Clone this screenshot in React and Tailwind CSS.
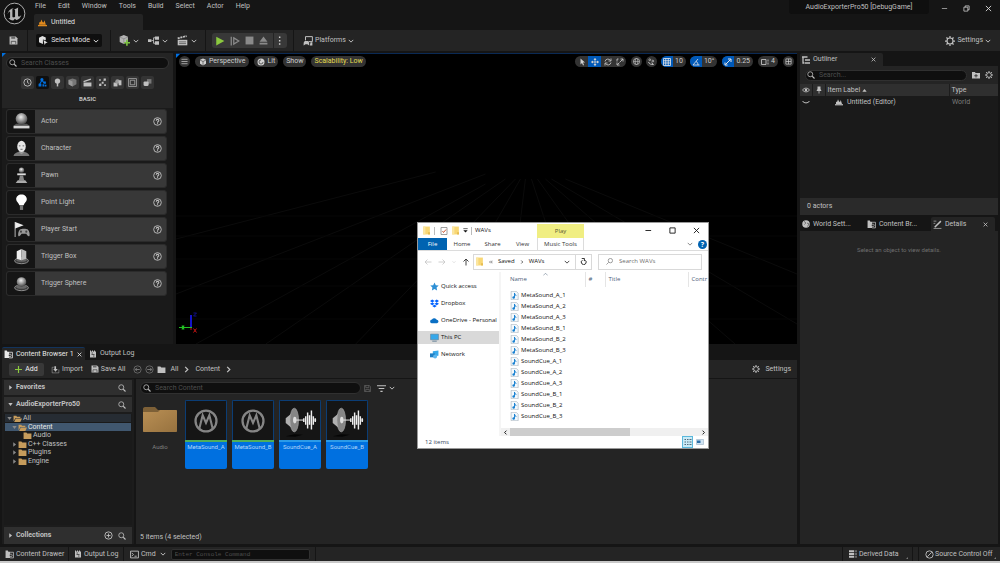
// src/App.jsx
import React, { useState } from "react";

// ------------------ Icons ------------------
const Svg = ({ children, box = 16, className = "size-[9px]" }) => (
  <svg
    viewBox={`0 0 ${box} ${box}`}
    className={`shrink-0 ${className}`}
    fill="none"
    stroke="currentColor"
    strokeWidth="1.6"
    aria-hidden="true"
  >
    {children}
  </svg>
);

const SearchIcon = ({ className }) => (
  <Svg className={className}>
    <circle cx="6.5" cy="6.5" r="5" />
    <path d="M10.5 10.5 15 15" strokeWidth="2.2" />
  </Svg>
);

const ChevronDown = () => (
  <Svg className="size-[6px]">
    <path d="M2 5l6 6 6-6" strokeWidth="2.6" />
  </Svg>
);

const ChevronRight = () => (
  <Svg className="size-[7px]">
    <path d="M5 2l6 6-6 6" strokeWidth="2.8" />
  </Svg>
);

const CloseIcon = ({ className = "size-[5px]" }) => (
  <Svg className={className}>
    <path d="M2 2l12 12M14 2 2 14" strokeWidth="2.6" />
  </Svg>
);

const GearIcon = ({ className }) => (
  <Svg className={className}>
    <circle cx="8" cy="8" r="4.8" strokeWidth="1.8" />
    <path
      d="M8 0v3M8 13v3M0 8h3M13 8h3M2.300 2.300l2.200 2.200M11.500 11.500l2.200 2.200M13.700 2.300l-2.200 2.200M4.500 11.500l-2.200 2.200"
      strokeWidth="2"
    />
  </Svg>
);

const HelpIcon = () => (
  <Svg className="size-[9px]">
    <circle cx="8" cy="8" r="6.8" />
    <path d="M5.8 6.5c0-3 4.5-3 4.5-.3C10.300 8 8 8 8 10M8 11v2" strokeWidth="1.9" />
  </Svg>
);

const LevelIcon = ({ className }) => (
  <Svg className={className}>
    <path d="M0 13.500h16" strokeWidth="2.400" />
    <path d="M2 12V8l2.500-1L6 2.500 8 7l2 1 1.500-4L14 12z" fill="currentColor" stroke="none" />
  </Svg>
);

const SaveIcon = ({ className }) => (
  <Svg className={className}>
    <path d="M1 1h11l3 3v11H1z" fill="currentColor" stroke="none" />
    <path d="M4 1h7v4H4z" fill="#6a6a6a" stroke="none" />
    <path d="M4 14V9.500h8V14" stroke="#303030" strokeWidth="1.200" />
  </Svg>
);

const DrawerIcon = ({ className }) => (
  <Svg className={className}>
    <path d="M1 1h4l1 2h3v11H1z" fill="currentColor" stroke="none" />
    <path d="M9 4h6v10H9" strokeWidth="1.400" />
    <circle cx="10.500" cy="9.500" r="2.300" strokeWidth="1.200" fill="#242424" />
  </Svg>
);

const LogIcon = ({ className }) => (
  <Svg className={className}>
    <path d="M2 1h2v2h2V1h2v2h2V1h2v2h2v12H2z" fill="currentColor" stroke="none" />
    <path d="M5 6h3M5 9h6M8 12h3" stroke="#242424" strokeWidth="1.400" />
  </Svg>
);

const SolidFolder = ({ className }) => (
  <Svg className={className}>
    <path d="M1 2.500h5l1.500 2H15V14H1z" fill="currentColor" stroke="none" />
  </Svg>
);

const OpenFolder = () => (
  <Svg className="size-[9px] text-[#c69c5c]">
    <path d="M1 13V3h5l1 2h6v2H4.500L1 13z" fill="currentColor" stroke="none" />
    <path d="M5 8h11l-3 6H2z" fill="currentColor" stroke="none" />
  </Svg>
);

const Triangle = ({ open, className = "size-[5px]" }) => (
  <Svg className={className}>
    {open ? (
      <path d="M1 3h14L8 13z" fill="currentColor" stroke="none" />
    ) : (
      <path d="M4 1l9 7-9 7z" fill="currentColor" stroke="none" />
    )}
  </Svg>
);

const UnrealLogo = () => (
  <Svg box={24} className="size-[23px] text-[#b4b4b4]">
    <circle cx="12" cy="12" r="10.800" fill="#0e0e0e" strokeWidth="1" />
    <path
      d="M4.800 12.300C5.500 9 8 6.600 11.200 6.200c-.9.500-1.400 1.100-1.400 2v6.600c0 1 .9 1.400 1.600 1.200.5-.1.900-.4 1.200-.7V8.800c0-.7-.4-1-1-1.200 1.600-.1 3.300-.9 4.400-2-.2.500-.3 1.100-.3 1.600v7.200c0 .7.4.9.9.8.9-.2 2-1 2.600-2-.7 3-3 5.200-5.400 5.700l-1.300-1.300-1.800 1.600c-2 .1-4-.9-5-2.400.9.300 1.700 0 1.700-1V10.600c0-1.200-1.300-.9-2.400 1.700z"
      fill="currentColor"
      stroke="none"
    />
  </Svg>
);

const CubeIcon = ({ className }) => (
  <Svg className={className}>
    <path d="M8 1l6 2.500v8L8 15l-6-3.500v-8z" fill="currentColor" stroke="none" />
    <path d="M2 4l6 3 6-3M8 7v8" stroke="#242424" strokeWidth="1.100" />
  </Svg>
);

const SelectModeIcon = () => (
  <Svg className="size-[9px]">
    <path d="M6 0l6 2.500v5L7 6v8L0 11V3z" fill="currentColor" stroke="none" />
    <path d="M8 7l7.500 5-3.500.5L10 16z" fill="currentColor" stroke="none" />
  </Svg>
);

const MusicFileIcon = () => (
  <Svg className="size-[9px]">
    <path d="M2 .5h9l3.500 3.500v11.500H2z" fill="#f4f9fd" stroke="#9aa7b3" strokeWidth="1" />
    <path d="M8 3.500v8M8 4c.3 2 3 2.500 2.500 5" stroke="#1780d0" strokeWidth="1.700" />
    <circle cx="6.500" cy="11.500" r="2.200" fill="#1780d0" stroke="none" />
  </Svg>
);

const YellowFolder = () => (
  <Svg className="size-[9px]">
    <path d="M2 1h12v14H2z" fill="#f8d775" stroke="none" />
    <path d="M2 1h4v14H2z" fill="#fbe6a2" stroke="none" />
    <path d="M11 11h3v4h-3z" fill="#e3b74a" stroke="none" />
  </Svg>
);

// ------------------ Place Actors thumbnails ------------------
const Pedestal = () => (
  <>
    <ellipse cx="16" cy="24" rx="13" ry="5.500" fill="#3a3a3a" stroke="#a5a5a5" strokeWidth="1.500" />
    <ellipse cx="16" cy="22" rx="10" ry="4" fill="#666" stroke="none" />
  </>
);

const actorArt = {
  Actor: (
    <>
      <path d="M1 24l5-4h20l5 4z" fill="#555" stroke="none" />
      <rect x="1" y="24" width="30" height="5" fill="#d5d5d5" stroke="none" />
      <circle cx="16" cy="11" r="11" fill="url(#ball)" stroke="none" />
    </>
  ),
  Character: (
    <>
      <path d="M1 30c1-6 8-7 11-9h8c3 2 10 3 11 9z" fill="#777" stroke="none" />
      <path d="M12 18h8v6l-4 3-4-3z" fill="#999" stroke="none" />
      <ellipse cx="16" cy="12" rx="8" ry="10.500" fill="#e6e6e6" stroke="none" />
      <path d="M11 11h3M18 11h3M14 17.500h4" stroke="#555" />
    </>
  ),
  Pawn: (
    <>
      <circle cx="16" cy="6" r="5" fill="url(#ball)" stroke="none" />
      <rect x="8" y="12" width="16" height="3.500" fill="#ddd" stroke="none" />
      <path d="M13 16h6l2 9H11z" fill="#888" stroke="none" />
      <path d="M5 30l4-5h14l4 5z" fill="#aaa" stroke="none" />
    </>
  ),
  "Point Light": (
    <>
      <path d="M16 1c6 0 10 4 10 9 0 5-5 7-6 11h-8c-1-4-6-6-6-11 0-5 4-9 10-9z" fill="#fff" stroke="none" />
      <rect x="13" y="21" width="6" height="9" fill="#777" stroke="none" />
    </>
  ),
  "Player Start": (
    <>
      <path d="M4 2v28" stroke="#aaa" strokeWidth="2" />
      <path d="M4 2l16 6-16 6z" fill="#eee" stroke="none" />
      <path d="M13 16c3-2 12-2 15 0 3 3 4 9 3 12-2 2-4-1-6-4h-9c-2 3-4 6-6 4-1-3 0-9 3-12z" fill="#999" stroke="none" />
      <circle cx="15" cy="20" r="2" fill="#444" stroke="none" />
      <circle cx="25" cy="20" r="2" fill="#444" stroke="none" />
    </>
  ),
  "Trigger Box": (
    <>
      <Pedestal />
      <path d="M7 6l9-4v21l-9-3z" fill="#eee" stroke="none" />
      <path d="M16 2l9 4v14l-9 3z" fill="#bbb" stroke="none" />
    </>
  ),
  "Trigger Sphere": (
    <>
      <Pedestal />
      <circle cx="16" cy="13" r="9" fill="url(#ball)" stroke="none" />
    </>
  ),
};

const actors = Object.keys(actorArt);

const BallGradient = () => (
  <svg className="absolute size-0" aria-hidden="true">
    <defs>
      <radialGradient id="ball" cx="45%" cy="35%" r="65%">
        <stop offset="0" stopColor="#eee" />
        <stop offset="0.500" stopColor="#999" />
        <stop offset="1" stopColor="#444" />
      </radialGradient>
      <linearGradient id="folder" x1="0" y1="0" x2="1" y2="1">
        <stop offset="0" stopColor="#b98f54" />
        <stop offset="1" stopColor="#97723f" />
      </linearGradient>
    </defs>
  </svg>
);

const categories = [
  {
    name: "Recently placed",
    icon: (
      <>
        <circle cx="8" cy="8" r="6.500" />
        <path d="M8 4v4l3 2" />
      </>
    ),
  },
  {
    name: "Basic",
    icon: (
      <>
        <circle cx="7" cy="3" r="2.800" fill="currentColor" stroke="none" />
        <path d="M7 4 3 11M7 4l4 5" strokeWidth="2" />
        <path d="M1 10h5v5H1zM8 11h3v4H8zM10 6h4v4h-4zM12 12h3v3h-3z" fill="currentColor" stroke="none" />
      </>
    ),
  },
  {
    name: "Lights",
    icon: (
      <>
        <circle cx="8" cy="5.500" r="4.800" fill="currentColor" stroke="none" />
        <path d="M8 9v6" strokeWidth="2.600" />
      </>
    ),
  },
  {
    name: "Shapes",
    icon: (
      <>
        <path d="M1 3l7-2 7 2v8l-7 4-7-4z" fill="#777" stroke="none" />
        <path d="M8 6v9l-7-4V3z" fill="#999" stroke="none" />
      </>
    ),
  },
  {
    name: "Cinematic",
    icon: (
      <>
        <path d="M1 8h14v7H1z" fill="currentColor" stroke="none" />
        <path d="M1 6.500 14 2" strokeWidth="2.600" />
      </>
    ),
  },
  {
    name: "Visual effects",
    icon: (
      <>
        <path d="M2 2h3v3H2zM10 1h4v4h-4zM7 7h3v3H7zM2 10h4v4H2zM11 11h3v3h-3z" fill="currentColor" stroke="none" />
        <path d="M3 12 12 3" strokeWidth="0.800" />
      </>
    ),
  },
  {
    name: "Geometry",
    icon: (
      <>
        <path d="M1 8h7v7H1z" fill="currentColor" stroke="none" />
        <circle cx="8" cy="6" r="4" fill="#999" stroke="none" />
        <path d="M10 4h5v9h-5z" fill="currentColor" stroke="none" />
      </>
    ),
  },
  {
    name: "Volumes",
    icon: (
      <>
        <path d="M1 1h14v14H1z" strokeWidth="1.200" />
        <path d="M4 4h8v8H4z" strokeWidth="1.200" />
      </>
    ),
  },
  {
    name: "All classes",
    icon: (
      <>
        <path d="M7 2h8v8H7z" fill="#777" stroke="none" />
        <rect x="1" y="6" width="9" height="8" rx="2" fill="currentColor" stroke="none" />
      </>
    ),
  },
];

// ------------------ Title bar ------------------
const menus = ["File", "Edit", "Window", "Tools", "Build", "Select", "Actor", "Help"];

const TitleBar = () => (
  <header className="flex h-[30px] shrink-0 items-start justify-between">
    <div className="flex">
      <div className="flex w-[34px] justify-center pt-[2px] pr-[6px]">
        <UnrealLogo />
      </div>
      <div>
        <nav className="flex h-3 items-center gap-3 px-px">
          {menus.map((m) => (
            <button key={m}>{m}</button>
          ))}
        </nav>
        <button className="mt-[2px] flex h-4 w-[109px] items-center gap-1 rounded-t-[2px] bg-[#242424] px-1 text-[#e0e0e0]">
          <LevelIcon className="size-[9px] text-[#e08a1e]" />
          Untitled
        </button>
      </div>
    </div>
    <div className="flex">
      <h1 className="h-[14px] w-[140px] rounded-b-[3px] bg-[#0f0f0f] text-center leading-[14px]">
        AudioExporterPro50 [DebugGame]
      </h1>
      <div className="flex items-center gap-[15px] py-[5px] pr-2 pl-3 text-[#e0e0e0]">
        <button aria-label="Minimize">
          <Svg className="size-[7px]">
            <path d="M2 8h12" strokeWidth="1.400" />
          </Svg>
        </button>
        <button aria-label="Restore">
          <Svg className="size-[7px]">
            <path d="M2 5h9v9H2zM5 5V2h9v9h-3" />
          </Svg>
        </button>
        <button aria-label="Close">
          <Svg className="size-[7px]">
            <path d="M2 2l12 12M14 2 2 14" strokeWidth="2" />
          </Svg>
        </button>
      </div>
    </div>
  </header>
);

// ------------------ Main toolbar ------------------
const ToolButton = ({ label, children }) => (
  <button aria-label={label} className="flex items-center gap-[3px]">
    {children}
    <ChevronDown />
  </button>
);

const MainToolbar = () => (
  <div className="flex h-[21px] shrink-0 items-stretch bg-[#242424]">
    <div className="flex w-7 items-center justify-center border-r border-[#151515]">
      <button aria-label="Save">
        <SaveIcon className="size-[9px]" />
      </button>
    </div>
    <div className="flex w-[83px] items-center border-r border-[#151515] px-2">
      <button className="flex h-[13px] w-[66px] items-center justify-center gap-[3px] rounded-[2px] bg-[#0f0f0f] text-[#e0e0e0]">
        <SelectModeIcon />
        Select Mode
        <ChevronDown />
      </button>
    </div>
    <div className="flex w-[95px] items-center justify-center gap-[9px] border-r border-[#151515]">
      <ToolButton label="Add content">
        <Svg className="size-[11px]">
          <path d="M7 0l6 2.500v7L7 13 1 10V2.500z" fill="#b5b5b5" stroke="none" />
          <path d="M1 3l6 2.500L13 3M7 5.500V13" stroke="#777" strokeWidth="0.800" />
          <path d="M11.500 7v8.500M7.500 11.200h8.500" stroke="#7cc142" strokeWidth="2.400" />
        </Svg>
      </ToolButton>
      <ToolButton label="Blueprints">
        <Svg className="size-[11px]">
          <path d="M0 6h5v4H0zM10 2h6v5h-6zM10 9h6v5h-6z" fill="currentColor" stroke="none" />
          <path d="M5 8h3M11 4H8v8h3" strokeWidth="1.200" />
        </Svg>
      </ToolButton>
      <ToolButton label="Cinematics">
        <Svg className="size-[11px]">
          <path d="M1 7h14v8H1z" fill="currentColor" stroke="none" />
          <path d="M1 5 14 1.500" strokeWidth="2.600" strokeDasharray="3 1" />
          <path d="M3 10h10M3 12.500h10" stroke="#242424" strokeWidth="0.800" />
        </Svg>
      </ToolButton>
    </div>
    <div className="flex w-[88px] items-center justify-center border-r border-[#151515]">
      <div className="flex h-[15px] items-center gap-[5px] rounded-[3px] bg-[#383838] px-[3px] text-[#8a8a8a]">
        <button aria-label="Play">
          <Svg className="size-[10px]">
            <path d="M2 1l13 7-13 7z" fill="#8bc93f" stroke="none" />
          </Svg>
        </button>
        <button aria-label="Step">
          <Svg className="size-[10px]">
            <path d="M2 1v14M6 3l8 5-8 5z" strokeWidth="2" />
          </Svg>
        </button>
        <button aria-label="Stop">
          <Svg className="size-[9px]">
            <path d="M1 1h14v14H1z" fill="currentColor" stroke="none" />
          </Svg>
        </button>
        <button aria-label="Eject">
          <Svg className="size-[9px]">
            <path d="M8 1l7 9H1zM1 12h14v3H1z" fill="currentColor" stroke="none" />
          </Svg>
        </button>
        <button aria-label="Play options" className="flex h-full items-center border-l border-[#242424] pl-px text-[#d0d0d0]">
          <Svg className="size-[9px]">
            <path d="M7 1h2.600v2.600H7zM7 7h2.600v2.600H7zM7 13h2.600v2.600H7z" fill="currentColor" stroke="none" />
          </Svg>
        </button>
      </div>
    </div>
    <button className="flex items-center gap-[2px] px-[9px]">
      <Svg className="size-[10px]">
        <path d="M4 1h11v8H9M4 1v6" />
        <path d="M1 15c0-6 1-7 3-7h3c2 0 3 1 3 7l-3-2H4zM12 10h3v5h-4z" fill="currentColor" stroke="none" />
      </Svg>
      Platforms
      <ChevronDown />
    </button>
    <button className="ml-auto flex items-center gap-[2px] pr-[9px]">
      <GearIcon className="size-[10px]" />
      Settings
      <ChevronDown />
    </button>
  </div>
);

// ------------------ Place Actors ------------------
const PlaceActors = () => {
  const [active, setActive] = useState("Basic");

  return (
    <section className="relative flex w-[171px] shrink-0 flex-col bg-[#1a1a1a]">
      <span className="absolute top-0 left-0 border-t-4 border-r-4 border-t-[#0070e0] border-r-transparent" />
      <div className="flex h-[55px] flex-col items-center bg-[#242424] px-1 pt-1">
        <label className="flex h-3 w-full items-center gap-1 rounded-full border border-[#343434] bg-[#0f0f0f] px-[2px]">
          <SearchIcon className="size-[8px]" />
          <input aria-label="Search classes" placeholder="Search Classes" className="w-full outline-none placeholder:text-[#4d4d4d]" />
        </label>
        <div className="mt-[7px] flex gap-[2px]">
          {categories.map((c) => (
            <button
              key={c.name}
              aria-label={c.name}
              onClick={() => setActive(c.name)}
              className={`flex size-[13px] items-center justify-center rounded-[2px] ${
                active === c.name ? "bg-[#0f0f0f] text-[#0070e0]" : "bg-[#343434]"
              }`}
            >
              <Svg className="size-[9px]">{c.icon}</Svg>
            </button>
          ))}
        </div>
        <h2 className="mt-[5px] text-[6px] font-bold">BASIC</h2>
      </div>
      <ul className="flex flex-col gap-[2px] pt-px pr-[6px] pl-1">
        {actors.map((name) => (
          <li key={name} className="flex h-[25px] overflow-hidden rounded-[3px] border border-[#2b2b2b] bg-[#383838]">
            <span className="flex w-[28px] items-center justify-center bg-[#151515]">
              <Svg box={32} className="size-[17px]">
                {actorArt[name]}
              </Svg>
            </span>
            <span className="flex flex-1 items-center justify-between pr-1 pl-[6px]">
              {name}
              <button aria-label={`Help for ${name}`}>
                <HelpIcon />
              </button>
            </span>
          </li>
        ))}
      </ul>
    </section>
  );
};

// ------------------ Viewport ------------------
const Pill = ({ children, label, className = "px-[3px]" }) => (
  <button aria-label={label} className={`flex h-[11px] items-center gap-[2px] rounded-full bg-[#333] ${className}`}>
    {children}
  </button>
);

const SnapPill = ({ label, value, icon }) => (
  <div className="flex h-[11px] overflow-hidden rounded-full bg-[#333]">
    <button aria-label={label} className="flex w-3 items-center justify-center bg-[#0059b8] text-[#e8e8e8]">
      <Svg className="size-[8px]">{icon}</Svg>
    </button>
    <button className="pr-[3px] pl-[2px]">{value}</button>
  </div>
);

const Viewport = () => (
  <section className="relative flex-1 overflow-hidden border-t border-[#0b2a55] bg-black">
    {/* floor grid */}
    <svg className="absolute inset-0 size-full" viewBox="0 0 622 290" preserveAspectRatio="none" fill="none" stroke="#0b0b0b" aria-hidden="true">
      <path d="M0 240 310 120M20 290 310 130M90 290 330 125M180 290 340 125M250 290 345 125M330 290 350 125M410 290 356 125M480 290 362 125M560 290 370 125M622 270 376 125M622 220 390 125M0 185 260 118" />
      <path d="M0 265h622M0 232h622M0 205h622M0 182h622M0 162h622" stroke="#070707" />
    </svg>
    <span className="absolute top-0 left-0 border-t-4 border-r-4 border-t-[#0070e0] border-r-transparent" />
    <div className="relative flex justify-between px-[3px] pt-[2px] text-[#d0d0d0]">
      <div className="flex gap-[5px]">
        <Pill label="Viewport options" className="px-[2px]">
          <Svg className="size-[7px]">
            <path d="M1 3h14M1 8h14M1 13h14" />
          </Svg>
        </Pill>
        <Pill className="px-1">
          <CubeIcon className="size-[8px]" />
          Perspective
        </Pill>
        <Pill>
          <Svg className="size-[8px]">
            <circle cx="8" cy="8" r="7" fill="currentColor" stroke="none" />
            <path d="M8 4a4 4 0 1 0 4 4" stroke="#444" />
          </Svg>
          Lit
        </Pill>
        <Pill>Show</Pill>
        <Pill className="px-[3px] text-[#e5dc52]">Scalability: Low</Pill>
      </div>
      <div className="flex gap-[5px]">
        <div className="flex h-[11px] overflow-hidden rounded-full bg-[#333]">
          <button aria-label="Select" className="flex w-[13px] items-center justify-center">
            <Svg className="size-[8px]">
              <path d="M5 1v12l3-3 2 5 2-1-2-5h4z" fill="currentColor" stroke="none" />
            </Svg>
          </button>
          <button aria-label="Move" className="flex w-[13px] items-center justify-center bg-[#0059b8]">
            <Svg className="size-[8px]">
              <path d="M8 1v14M1 8h14" />
              <path d="M8 0l3 4H5zM8 16l3-4H5zM0 8l4-3v6zM16 8l-4-3v6z" fill="currentColor" stroke="none" />
            </Svg>
          </button>
          <button aria-label="Rotate" className="flex w-[13px] items-center justify-center">
            <Svg className="size-[8px]">
              <path d="M2 7a6 6 0 0 1 11-2M14 9a6 6 0 0 1-11 2M14 1v5H9M2 15v-5h5" />
            </Svg>
          </button>
          <button aria-label="Scale" className="flex w-3 items-center justify-center">
            <Svg className="size-[8px]">
              <path d="M8 8l6-6M9 2h5v5M2 9v5h5M2 7V2h3M7 9l-4 4" />
            </Svg>
          </button>
        </div>
        <div className="flex gap-1">
          <Pill label="World space" className="px-[2px]">
            <Svg className="size-[7px]">
              <circle cx="8" cy="8" r="7" />
              <ellipse cx="8" cy="8" rx="3" ry="7" strokeWidth="1.200" />
              <path d="M1 8h14" strokeWidth="1.200" />
            </Svg>
          </Pill>
          <Pill label="Surface snapping" className="px-[2px]">
            <Svg className="size-[7px]">
              <circle cx="4" cy="4" r="2" />
              <circle cx="11" cy="7" r="2" />
              <path d="M1 9c2 5 6 6 11 6M8 11l5 4" strokeWidth="2" />
            </Svg>
          </Pill>
          <SnapPill label="Grid snap" value="10" icon={<path d="M1 1h14v14H1zM1 5.500h14M1 10h14M5.500 1v14M10.500 1v14" />} />
          <SnapPill label="Angle snap" value="10°" icon={<path d="M12 2 2 14h13M8 7c3 1 4 4 4 7" />} />
        </div>
        <SnapPill label="Scale snap" value="0.25" icon={<path d="M3 13 13 3M8 2h6v6M2 9v5h5" strokeWidth="2" />} />
        <Pill>
          <Svg className="size-[8px]">
            <path d="M1 3h9v10H1zM14 3v4M14 9v4" />
          </Svg>
          4
        </Pill>
        <Pill label="Maximize viewport" className="px-[2px]">
          <Svg className="size-[7px]">
            <path d="M2 2h12v12H2zM8 2v12M2 8h12" />
          </Svg>
        </Pill>
      </div>
    </div>
    {/* axis gizmo */}
    <svg className="absolute bottom-[10px] left-[2px] h-[22px] w-5" viewBox="0 0 20 22" aria-hidden="true">
      <path d="M13 3v12" stroke="#1414c8" strokeWidth="2" />
      <path d="M1 15.500h13M4 13.500l2 4M6 13.500l-2 4" stroke="#22c022" strokeWidth="1.200" />
      <path d="M15.500 1h3l-3 3h3" stroke="#1414a0" fill="none" strokeWidth="0.800" />
      <path d="M15.500 16.500l3 4M18.500 16.500l-3 4M13 16v2" stroke="#c81414" strokeWidth="1" />
    </svg>
  </section>
);

// ------------------ Content Browser ------------------
const SourceHeader = ({ title, open, add, className = "h-[15px]" }) => (
  <div className={`flex shrink-0 items-center gap-[3px] bg-[#2f2f2f] px-1 ${className}`}>
    <Triangle open={open} />
    <h3 className="flex-1 font-bold">{title}</h3>
    {add && (
      <button aria-label="Add collection" className="mr-[2px]">
        <Svg className="size-[9px]">
          <circle cx="8" cy="8" r="6.500" />
          <path d="M8 4.500v7M4.500 8h7" />
        </Svg>
      </button>
    )}
    <button aria-label={`Search ${title}`} className="mr-[2px]">
      <SearchIcon className="size-[8px]" />
    </button>
  </div>
);

const tree = [
  { name: "All", open: true, pad: "pl-[2px]", row: "bg-[#262c33]" },
  { name: "Content", open: true, pad: "pl-[7px]", row: "bg-[#40576f] text-[#e8e8e8]" },
  { name: "Audio", leaf: true, pad: "pl-[12px]", row: "" },
  { name: "C++ Classes", pad: "pl-[7px]", row: "" },
  { name: "Plugins", pad: "pl-[7px]", row: "" },
  { name: "Engine", pad: "pl-[7px]", row: "" },
];

const MetaArt = () => (
  <Svg box={42} className="h-10 w-10 text-[#858585]">
    <circle cx="21" cy="21" r="11" strokeWidth="2.400" />
    <path d="M14 29l3.500-14L21 23l3.500-8L28 29" strokeWidth="2.200" />
  </Svg>
);

const CueArt = () => (
  <Svg box={42} className="h-10 w-10 text-[#eee]">
    <path d="M6 37l9-2 9 .5-8 2z" fill="#050505" stroke="none" />
    <path d="M6 18l6-5v15l-6-5z" fill="#b0b0b0" stroke="none" />
    <ellipse cx="15" cy="20" rx="4.500" ry="12.500" fill="#858585" stroke="#aaa" strokeWidth="0.600" />
    <ellipse cx="15.500" cy="20" rx="1.800" ry="3.500" fill="#ddd" stroke="none" />
    <path d="M17 20h8M36 20h2" strokeWidth="1" />
    <path d="M25 18v4M27 16v9M29 12v17M31 15v10M33 10v20M35 16v9M37 18v4" strokeWidth="1.500" />
  </Svg>
);

const assets = [
  { name: "MetaSound_A", art: <MetaArt />, line: "bg-[#4fae5a]" },
  { name: "MetaSound_B", art: <MetaArt />, line: "bg-[#4fae5a]" },
  { name: "SoundCue_A", art: <CueArt />, line: "bg-[#2b9be8]" },
  { name: "SoundCue_B", art: <CueArt />, line: "bg-[#2b9be8]" },
];

const ContentBrowser = () => (
  <section className="flex h-[197px] shrink-0 flex-col">
    <div className="flex h-[13px] shrink-0 items-stretch gap-1">
      <button className="flex w-[83px] items-center gap-[3px] rounded-t-[2px] border-t border-[#12335c] bg-[#242424] px-[2px] text-[#e8e8e8]">
        <DrawerIcon className="size-[9px]" />
        Content Browser 1
        <CloseIcon />
      </button>
      <button className="flex items-center gap-[3px]">
        <LogIcon className="size-[8px]" />
        Output Log
      </button>
    </div>

    <div className="flex h-[18px] shrink-0 items-center bg-[#242424] pr-[6px] pl-[7px]">
      <button className="flex h-[13px] w-[35px] items-center justify-center gap-[3px] rounded-[2px] bg-[#383838] text-[#f0f0f0]">
        <Svg className="size-[7px] text-[#8bc93f]">
          <path d="M8 0v16M0 8h16" strokeWidth="2.600" />
        </Svg>
        Add
      </button>
      <button className="ml-[7px] flex items-center gap-[2px]">
        <Svg className="size-[9px]">
          <path d="M5 4H2v10h12V8" strokeWidth="0.800" />
          <path d="M6 2h3v5h3l-4 5-4-5h2z" fill="currentColor" stroke="none" />
        </Svg>
        Import
      </button>
      <button className="ml-2 flex items-center gap-[2px]">
        <SaveIcon className="size-[8px]" />
        Save All
      </button>
      <div className="ml-[7px] flex items-center gap-[3px]">
        <button aria-label="Back">
          <Svg className="size-[9px] text-[#808080]">
            <circle cx="8" cy="8" r="6.500" strokeWidth="1.200" />
            <path d="M12 8H4M7 5 4 8l3 3" />
          </Svg>
        </button>
        <button aria-label="Forward">
          <Svg className="size-[9px] text-[#808080]">
            <circle cx="8" cy="8" r="6.500" strokeWidth="1.200" />
            <path d="M4 8h8M9 5l3 3-3 3" />
          </Svg>
        </button>
        <SolidFolder className="size-[9px]" />
        <a href="#all" className="pl-[2px]">
          All
        </a>
        <span className="px-[2px]">
          <ChevronRight />
        </span>
        <a href="#content">Content</a>
        <span className="px-[2px]">
          <ChevronRight />
        </span>
      </div>
      <button className="ml-auto flex items-center gap-[5px]">
        <GearIcon className="size-[8px]" />
        Settings
      </button>
    </div>

    <div className="flex min-h-0 flex-1 gap-[2px] pt-px">
      <div className="flex w-[132px] shrink-0 flex-col gap-[2px] bg-[#1c1c1c] px-[2px] pt-px">
        <SourceHeader title="Favorites" />
        <SourceHeader title="AudioExporterPro50" open />
        <ul className="flex-1 bg-[#1a1a1a]">
          {tree.map((t) => (
            <li key={t.name} className={`mx-px mb-px flex h-[8px] items-center gap-px leading-[8px] even:mb-0 ${t.pad} ${t.row}`}>
              <span className="w-[5px] text-[#8a8a8a]">{!t.leaf && <Triangle open={t.open} />}</span>
              {t.open ? <OpenFolder /> : <SolidFolder className="size-[9px] text-[#c69c5c]" />}
              {t.name}
            </li>
          ))}
        </ul>
        <SourceHeader title="Collections" add className="h-[17px]" />
      </div>

      <div className="flex flex-1 flex-col bg-[#242424] px-1 pt-[3px] pb-[2px]">
        <div className="flex items-center">
          <label className="flex h-3 w-[221px] items-center gap-1 rounded-full border border-[#303030] bg-[#0f0f0f] px-[2px]">
            <SearchIcon className="size-[8px]" />
            <input aria-label="Search content" placeholder="Search Content" className="w-full outline-none placeholder:text-[#4d4d4d]" />
          </label>
          <button aria-label="Save search" className="ml-[3px] text-[#666]">
            <Svg className="size-[7px]">
              <path d="M1 1h11l3 3v11H1zM4 1v5h7V1M4 15V10h8v5" />
            </Svg>
          </button>
          <button aria-label="Filters" className="ml-[6px] flex items-center gap-[3px]">
            <Svg className="size-[9px]">
              <path d="M0 3h16M3 8h10M6 13h4" strokeWidth="2" />
            </Svg>
            <ChevronDown />
          </button>
        </div>
        <div className="mt-[6px] flex gap-[5px]">
          <div className="flex w-10 flex-col items-center">
            <svg className="mt-[5px] h-7 w-9" viewBox="0 0 36 28" aria-hidden="true">
              <path d="M1 4c0-1 .5-2 2-2h10l3 3h17v5H1z" fill="#7d6037" />
              <path d="M1 7h15l2-2h16c.6 0 1 .4 1 1v20c0 .6-.4 1-1 1H2c-.6 0-1-.4-1-1z" fill="url(#folder)" />
            </svg>
            <span className="mt-[9px] text-[6px] text-[#808080]">Audio</span>
          </div>
          {assets.map((a) => (
            <button key={a.name} className="flex h-[69px] w-[42px] flex-col overflow-hidden rounded-[2px] bg-[#0070e0] text-[#b5d6f8]">
              <span className="flex h-10 w-full items-center justify-center border border-b-0 border-[#0b3d75] bg-[#151515]">{a.art}</span>
              <span className={`h-[2px] w-full shrink-0 ${a.line}`} />
              <span className="w-full flex-1 text-center text-[6px]">{a.name}</span>
            </button>
          ))}
        </div>
        <p className="mt-auto">5 items (4 selected)</p>
      </div>
    </div>
  </section>
);

// ------------------ Outliner + Details ------------------
const Outliner = () => (
  <section className="flex h-[162px] shrink-0 flex-col">
    <div className="h-[13px] shrink-0">
      <button className="flex h-full w-[83px] items-center gap-[3px] rounded-t-[2px] bg-[#242424] px-[2px]">
        <Svg className="size-[8px]">
          <path d="M0 2h11M6 8h10M6 14h10M2 2v12h3" strokeWidth="2.600" />
        </Svg>
        <span className="flex-1 text-left">Outliner</span>
        <span className="pr-[5px]">
          <CloseIcon />
        </span>
      </button>
    </div>
    <div className="flex h-[18px] shrink-0 items-center gap-[5px] bg-[#242424] px-[5px]">
      <label className="flex h-[11px] flex-1 items-center gap-1 rounded-full border border-[#303030] bg-[#0f0f0f] px-px">
        <SearchIcon className="size-[8px]" />
        <input aria-label="Search outliner" placeholder="Search..." className="w-full outline-none placeholder:text-[#4d4d4d]" />
      </label>
      <button aria-label="New folder">
        <Svg className="size-[8px]">
          <path d="M0 2h6l1 2h9v11H0z" fill="currentColor" stroke="none" />
          <path d="M8 6v7M4.500 9.500h7" stroke="#242424" />
        </Svg>
      </button>
      <button aria-label="Outliner settings">
        <GearIcon className="size-[8px]" />
      </button>
    </div>
    <table className="w-full table-fixed border-collapse bg-[#1a1a1a] text-left">
      <thead className="bg-[#2f2f2f]">
        <tr className="h-3">
          <th aria-label="Visibility" className="w-3 border-r border-[#1c1c1c] pl-[2px]">
            <Svg className="size-[8px]">
              <path d="M1 8c3-5 11-5 14 0-3 5-11 5-14 0z" />
              <circle cx="8" cy="8" r="2.500" fill="currentColor" stroke="none" />
            </Svg>
          </th>
          <th aria-label="Pinned" className="w-[13px] border-r border-[#1c1c1c] pl-[2px]">
            <Svg className="size-[8px]">
              <path d="M5 1h6v5l2 4H3l2-4z" fill="currentColor" stroke="none" />
              <path d="M8 10v5" />
            </Svg>
          </th>
          <th className="border-r border-[#1c1c1c] px-[2px] font-normal">
            <span className="flex items-center gap-[2px]">
              Item Label
              <Svg className="size-[5px]">
                <path d="M1 12h14L8 3z" fill="currentColor" stroke="none" />
              </Svg>
            </span>
          </th>
          <th className="w-[49px] px-[2px] font-normal">Type</th>
        </tr>
      </thead>
      <tbody>
        <tr className="h-3">
          <td className="pl-[2px]">
            <Svg className="size-[8px]">
              <path d="M1 6c3 5 11 5 14 0" strokeWidth="2" />
            </Svg>
          </td>
          <td />
          <td>
            <span className="flex items-center gap-1 pl-[10px]">
              <LevelIcon className="size-[8px]" />
              Untitled (Editor)
            </span>
          </td>
          <td className="px-[3px] text-[#7a7a7a]">World</td>
        </tr>
      </tbody>
    </table>
    <div className="flex-1 bg-[#1a1a1a]" />
    <p className="h-[17px] bg-[#2a2a2a] px-[7px] leading-[17px]">0 actors</p>
  </section>
);

const Details = () => (
  <section className="mt-[2px] flex min-h-0 flex-1 flex-col">
    <div className="flex h-[14px] shrink-0 items-stretch">
      <button className="flex w-[65px] items-center gap-[3px] px-[2px]">
        <Svg className="size-[8px]">
          <circle cx="8" cy="8" r="7.500" fill="currentColor" stroke="none" />
          <path d="M4 3c4 1 4 4 1 6M10 6l4 2-3 5" stroke="#555" />
        </Svg>
        World Sett...
      </button>
      <button className="flex flex-1 items-center gap-[3px] px-[2px]">
        <DrawerIcon className="size-[9px]" />
        Content Br...
      </button>
      <button className="mr-[3px] flex w-16 items-center gap-[3px] rounded-t-[2px] bg-[#242424] px-[2px]">
        <Svg className="size-[9px]">
          <path d="M3 13 14 2" strokeWidth="2.600" />
          <path d="M1 15h14M1 2h5M1 6h3" strokeWidth="1.200" />
        </Svg>
        <span className="flex-1 text-left">Details</span>
        <span className="pr-[5px]">
          <CloseIcon />
        </span>
      </button>
    </div>
    <div className="flex-1 bg-[#242424] pt-[14px] text-center text-[6px] text-[#6f6f6f]">
      Select an object to view details.
    </div>
  </section>
);

// ------------------ Status bar ------------------
const StatusBar = () => (
  <footer className="flex h-[14px] shrink-0 items-stretch bg-[#242424]">
    <button className="flex w-[69px] items-center gap-[2px] border-r border-[#151515] pl-[5px]">
      <DrawerIcon className="size-[9px]" />
      Content Drawer
    </button>
    <button className="flex w-[55px] items-center gap-[2px] border-r border-[#151515] pl-[5px]">
      <LogIcon className="size-[8px]" />
      Output Log
    </button>
    <div className="flex items-center gap-[5px] border-r border-[#151515] pr-[5px] pl-[6px]">
      <button className="flex items-center gap-[2px]">
        <Svg className="size-[9px]">
          <path d="M1 2h14v12H1zM3 5l3 3-3 3M8 11h4" />
        </Svg>
        Cmd
        <span className="pl-[2px]">
          <ChevronDown />
        </span>
      </button>
      <input
        aria-label="Console command"
        placeholder="Enter Console Command"
        className="h-[11px] w-[139px] rounded-[2px] border border-[#303030] bg-[#0f0f0f] px-[3px] font-['Liberation_Mono',monospace] text-[6px] outline-none placeholder:text-[#4d4d4d]"
      />
    </div>
    <button className="ml-auto flex w-[71px] items-center gap-[2px] border-x border-[#151515] pl-[6px]">
      <Svg className="size-[8px]">
        <path d="M0 2.500h10M0 8h10M0 13.500h10" strokeWidth="4" />
        <path d="M11 2.500h5M11 8h5M11 13.500h5" strokeWidth="4" stroke="#666" />
      </Svg>
      Derived Data
      <span className="mt-2 mr-1 ml-auto border-b-2 border-l-2 border-b-[#777] border-l-transparent" />
    </button>
    <button className="ml-[5px] flex w-[82px] items-center gap-px border-l border-[#151515] pl-[6px]">
      <Svg className="size-[9px]">
        <circle cx="8" cy="8" r="6.500" />
        <path d="M4 12l8-8" />
      </Svg>
      Source Control Off
      <span className="mt-2 border-b-2 border-l-2 border-b-[#777] border-l-transparent" />
    </button>
  </footer>
);

// ------------------ File Explorer window ------------------
const files = ["MetaSound_A", "MetaSound_B", "SoundCue_A", "SoundCue_B"].flatMap((f) => [1, 2, 3].map((n) => `${f}_${n}`));

const places = [
  {
    name: "Quick access",
    icon: <path d="M8 1l2.300 4.600 5.200.7-3.800 3.600.9 5.200L8 12.600l-4.600 2.500.9-5.200L.5 6.300l5.200-.7z" fill="#2d8fd5" stroke="none" />,
  },
  {
    name: "Dropbox",
    icon: <path d="M4 1 0 3.500 4 6l4-2.500zM12 1 8 3.500 12 6l4-2.500zM4 6 0 8.500 4 11l4-2.500zM12 6 8 8.500l4 2.500 4-2.500zM8 10l-4 2.500L8 15l4-2.500z" fill="#0061fe" stroke="none" />,
  },
  {
    name: "OneDrive - Personal",
    icon: <path d="M4 13a3.500 3.500 0 0 1-.5-7A5 5 0 0 1 12 6.500 3.300 3.300 0 0 1 12.500 13z" fill="#0a6fc4" stroke="none" />,
  },
  {
    name: "This PC",
    icon: (
      <>
        <path d="M1 2h14v10H1z" fill="#36a8ea" stroke="#5f7d94" strokeWidth="1" />
        <path d="M4 14.500h8" stroke="#5f7d94" />
      </>
    ),
  },
  {
    name: "Network",
    icon: (
      <>
        <path d="M5 2l10-1v9l-10 1z" fill="#36a8ea" stroke="none" />
        <path d="M0 6h9v7H0z" fill="#1f7fc4" stroke="none" />
        <circle cx="9" cy="11.500" r="3.500" fill="#5bb6ee" stroke="none" />
      </>
    ),
  },
];

const Explorer = () => {
  const [place, setPlace] = useState("This PC");

  return (
    <section className="absolute top-[222px] left-[417px] flex h-[227px] w-[292px] flex-col border border-[#999] bg-white font-['Open_Sans',sans-serif] text-[6px] leading-[9px] text-[#111]">
      {/* title row */}
      <div className="flex h-[15px] shrink-0 items-center">
        <div className="flex w-[119px] items-center gap-[3px] pl-1">
          <YellowFolder />
          <span className="h-2 w-px bg-[#bbb]" />
          <span className="pl-[2px]">
            <Svg className="size-[8px]">
              <path d="M2 1h12v14H2z" stroke="#888" />
              <path d="M5 8l2 3 5-6" stroke="#d05a35" strokeWidth="2" />
            </Svg>
          </span>
          <YellowFolder />
          <Svg className="size-[5px]">
            <path d="M1 2h14" strokeWidth="2" />
            <path d="M1 7h14l-7 7z" fill="currentColor" stroke="none" />
          </Svg>
          <span className="h-2 w-px bg-[#bbb]" />
          WAVs
        </div>
        <span className="mt-px h-[14px] w-[47px] bg-[#f0ee82] text-center leading-[15px] text-[#555533]">Play</span>
        <div className="ml-auto flex items-center gap-[17px] pr-2">
          <button aria-label="Minimize window">
            <Svg className="size-[7px]">
              <path d="M1 8h13" strokeWidth="2" />
            </Svg>
          </button>
          <button aria-label="Maximize window">
            <Svg className="size-[7px]">
              <path d="M2 2h12v12H2z" strokeWidth="2" />
            </Svg>
          </button>
          <button aria-label="Close window">
            <Svg className="size-[7px]">
              <path d="M2 2l12 12M14 2 2 14" strokeWidth="2" />
            </Svg>
          </button>
        </div>
      </div>

      {/* ribbon tabs */}
      <div className="flex h-[13px] shrink-0 items-stretch border-b border-[#dcdcdc] text-[#333]">
        <button className="w-[29px] bg-[#0063b1] text-white">File</button>
        <button className="w-[30px]">Home</button>
        <button className="w-[31px]">Share</button>
        <button className="w-[29px]">View</button>
        <button className="w-[47px] border-x border-[#dcdcdc]">Music Tools</button>
        <div className="ml-auto flex items-center gap-[5px] pr-px">
          <span className="text-[#888]">
            <ChevronDown />
          </span>
          <button aria-label="Help" className="size-[9px] rounded-full bg-[#0063b1] text-center text-[7px] leading-[9px] font-bold text-white">
            ?
          </button>
        </div>
      </div>

      {/* address row */}
      <div className="flex h-[21px] shrink-0 items-center px-[6px]">
        <div className="flex w-[49px] items-center gap-[6px] text-[#c4c4c4]">
          <button aria-label="Back">
            <Svg className="size-[8px]">
              <path d="M15 8H2M7 3 2 8l5 5" />
            </Svg>
          </button>
          <button aria-label="Forward">
            <Svg className="size-[8px]">
              <path d="M1 8h13M9 3l5 5-5 5" />
            </Svg>
          </button>
          <Svg className="size-[4px]">
            <path d="M2 5l6 6 6-6" strokeWidth="2" />
          </Svg>
          <button aria-label="Up" className="text-[#444]">
            <Svg className="size-[8px]">
              <path d="M8 15V2M3 7l5-5 5 5" strokeWidth="2" />
            </Svg>
          </button>
        </div>
        <div className="flex h-4 w-[119px] items-center gap-[5px] border border-[#d9d9d9] pl-px">
          <YellowFolder />
          <Svg className="size-[4px]">
            <path d="M7 3 2 8l5 5M14 3 9 8l5 5" strokeWidth="2" />
          </Svg>
          <span>Saved</span>
          <Svg className="size-[4px]">
            <path d="M5 2l6 6-6 6" strokeWidth="2.600" />
          </Svg>
          <span className="flex-1">WAVs</span>
          <Svg className="size-[6px]">
            <path d="M2 5l6 6 6-6" strokeWidth="2" />
          </Svg>
          <button aria-label="Refresh" className="flex h-full w-4 items-center justify-center border-l border-[#d9d9d9]">
            <Svg className="size-[7px]">
              <path d="M11.500 5a5.500 5.500 0 1 1-6 0" strokeWidth="2" />
              <path d="M4 1h6v6" strokeWidth="2" />
            </Svg>
          </button>
        </div>
        <label className="ml-[6px] flex h-4 flex-1 items-center gap-[6px] border border-[#d9d9d9] px-[7px] text-[#777]">
          <Svg className="size-[7px]">
            <circle cx="10" cy="6" r="5" />
            <path d="M6 10l-5 5" />
          </Svg>
          <input aria-label="Search WAVs" placeholder="Search WAVs" className="w-full outline-none placeholder:text-[#6d6d6d]" />
        </label>
      </div>

      {/* body */}
      <div className="flex min-h-0 flex-1">
        <nav className="flex w-[83px] shrink-0 flex-col gap-1 border-r-2 border-[#f5f5f5] pt-2">
          {places.map((p) => (
            <button
              key={p.name}
              onClick={() => setPlace(p.name)}
              className={`flex h-[13px] shrink-0 items-center gap-[2px] pl-3 whitespace-nowrap ${place === p.name ? "bg-[#d9d9d9]" : ""}`}
            >
              <Svg className="size-[9px]">{p.icon}</Svg>
              {p.name}
            </button>
          ))}
        </nav>
        <div className="flex min-w-0 flex-1 flex-col">
          <div className="flex-1">
            <table className="w-full table-fixed border-collapse text-left">
              <thead className="text-[#4c6078]">
                <tr className="h-[15px]">
                  <th className="relative w-[84px] border-r border-[#e5e5e5] pl-[9px] font-normal">
                    Name
                    <Svg className="absolute top-0 left-[42px] size-[5px]">
                      <path d="M1 11l7-7 7 7" />
                    </Svg>
                  </th>
                  <th className="w-5 border-r border-[#e5e5e5] pl-[3px] font-normal">#</th>
                  <th className="w-[83px] border-r border-[#e5e5e5] pl-[3px] font-normal">Title</th>
                  <th className="pl-[3px] font-normal">Contr</th>
                </tr>
              </thead>
              <tbody>
                <tr className="h-[3px]">
                  <td colSpan="4" />
                </tr>
                {files.map((f) => (
                  <tr key={f} className="h-[11px]">
                    <td className="pl-[9px]">
                      <span className="flex items-center gap-[2px]">
                        <MusicFileIcon />
                        {f}
                      </span>
                    </td>
                    <td />
                    <td />
                    <td />
                  </tr>
                ))}
              </tbody>
            </table>
          </div>
          <div className="flex h-2 shrink-0 items-center bg-[#f0f0f0]">
            <button aria-label="Scroll left" className="flex w-[9px] justify-center">
              <Svg className="size-[5px]">
                <path d="M11 2 5 8l6 6" strokeWidth="3" />
              </Svg>
            </button>
            <div className="h-full w-[120px] bg-[#cdcdcd]" />
            <button aria-label="Scroll right" className="ml-auto flex w-[9px] justify-center">
              <Svg className="size-[5px]">
                <path d="M5 2l6 6-6 6" strokeWidth="3" />
              </Svg>
            </button>
          </div>
        </div>
      </div>
      <div className="flex h-3 shrink-0 items-center justify-between pr-1 pl-[7px] text-[#33475c]">
        12 items
        <div className="flex items-center gap-[3px]">
          <button aria-label="Details view" className="flex h-3 w-[11px] items-center justify-center border border-[#5bb8dc] bg-[#c9ebf7]">
            <Svg className="size-[8px]">
              <path d="M1 3h3M6 3h3M11 3h4M1 8h3M6 8h3M11 8h4M1 13h3M6 13h3M11 13h4" />
            </Svg>
          </button>
          <button aria-label="Thumbnail view">
            <Svg className="size-[8px]">
              <path d="M1 3h14v10H1z" fill="#cfe3f2" stroke="#8aa5bb" strokeWidth="1" />
              <path d="M2 5h7v5H2z" fill="#2d6fa8" stroke="none" />
            </Svg>
          </button>
        </div>
      </div>
    </section>
  );
};

// ------------------ App ------------------
const App = () => {
  return (
    <div className="relative flex h-screen flex-col overflow-hidden border-b-2 border-[#c9c9c9] bg-[#151515] font-[Roboto,sans-serif] text-[7px] leading-[9px] text-[#c0c0c0]">
      <BallGradient />
      <TitleBar />
      <MainToolbar />
      <main className="flex min-h-0 flex-1 gap-[3px] px-[2px] pt-[2px] pb-[3px]">
        <div className="flex min-w-0 flex-1 flex-col gap-[3px]">
          <div className="flex min-h-0 flex-1 gap-[3px]">
            <PlaceActors />
            <Viewport />
          </div>
          <ContentBrowser />
        </div>
        <aside className="flex w-[198px] shrink-0 flex-col">
          <Outliner />
          <Details />
        </aside>
      </main>
      <StatusBar />
      <Explorer />
    </div>
  );
};

export default App;
